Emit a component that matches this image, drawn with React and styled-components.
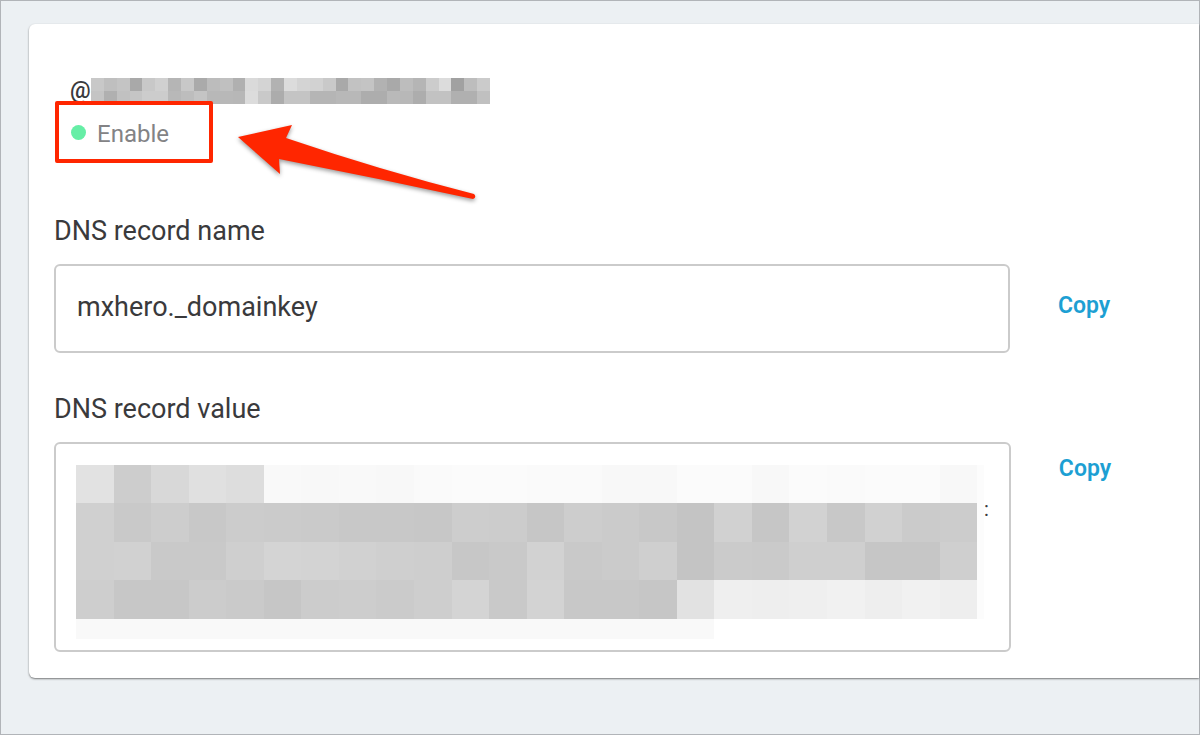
import React from "react";
import styled, { createGlobalStyle } from "styled-components";

const colors = {
  page: "#ecf0f3",
  frame: "#b1b4b8",
  text: "#3a3a3c",
  muted: "#838385",
  border: "#cbcbcb",
  link: "#1d9fd3",
  green: "#66eea6",
  red: "#ff2600",
};

const GlobalStyle = createGlobalStyle`
  *, *::before, *::after {
    box-sizing: border-box;
  }

  body {
    margin: 0;
    font-family: Roboto, "Liberation Sans", sans-serif;
    color: ${colors.text};
  }
`;

const Page = styled.main`
  min-height: 100vh;
  padding: 23px 0 55px 28px;
  background-color: ${colors.page};
  border: 1px solid ${colors.frame};
`;

const Card = styled.section`
  padding: 54px 0 26px 25px;
  background-color: #fff;
  border-radius: 6px 0 0 6px;
  box-shadow: 0 1px 2px rgba(0, 0, 0, 0.5);
`;

const Domain = styled.h1`
  display: flex;
  align-items: center;
  height: 26px;
  margin: 0 0 -3px;
  padding-left: 16px;
  font-size: 23px;
  font-weight: 500;
  line-height: 24px;
`;

const DomainPixels = styled.svg`
  display: block;
  width: 399px;
  height: 26px;
`;

const StatusRow = styled.div`
  position: relative;
  display: flex;
  margin-bottom: 52px;
`;

const Status = styled.div`
  display: flex;
  align-items: center;
  gap: 11px;
  width: 158px;
  height: 62px;
  margin-left: 1px;
  padding: 4px 12px 0;
  color: ${colors.muted};
  font-size: 24px;
  line-height: 28px;
  border: 4px solid ${colors.red};
  border-radius: 2px;
`;

const Dot = styled.span`
  width: 15px;
  height: 15px;
  margin-bottom: 4px;
  border-radius: 50%;
  background-color: ${colors.green};
`;

const Arrow = styled.svg`
  position: absolute;
  left: 176px;
  top: 14px;
  width: 260px;
  height: 100px;
  overflow: visible;
  filter: drop-shadow(0 2px 2px rgba(0, 0, 0, 0.4));
`;

const Field = styled.div`
  display: grid;
  grid-template-columns: 1fr 189px;
  row-gap: 17px;

  & + & {
    margin-top: 40px;
  }
`;

const Label = styled.label`
  grid-column: 1 / -1;
  font-size: 27px;
  line-height: 32px;
`;

const TextInput = styled.input`
  width: 100%;
  height: 89px;
  padding: 0 21px 4px;
  color: ${colors.text};
  font: inherit;
  font-size: 27px;
  background-color: #fff;
  border: 2px solid ${colors.border};
  border-radius: 6px;
  outline: none;
`;

const ValueBox = styled.output`
  display: flex;
  height: 210px;
  padding: 21px 20px 0;
  font-size: 20px;
  line-height: 88px;
  border: 2px solid ${colors.border};
  border-radius: 6px;
`;

const ValuePixels = styled.svg`
  flex: 1;
  min-width: 0;
  height: 176px;
`;

const CopyButton = styled.button`
  align-self: ${({ $top }) => ($top ? "start" : "center")};
  justify-self: start;
  margin-left: 48px;
  padding: ${({ $top }) => ($top ? "13px 0" : "0 0 6px")};
  color: ${colors.link};
  font: inherit;
  font-size: 23px;
  font-weight: 600;
  line-height: 28px;
  background: none;
  border: 0;
  cursor: pointer;
`;

// one hex pair per block, used as a grey level
const domainRows = [
  "c8 bf c4 a9 c8 d0 b5 c8 aa bc c0 b0 da d4 b2 dc d4 d2 c9 a9 c2 c4 b2 a9 bd b5 cc dc a1 bd cb",
  "c4 b0 c1 c5 cc cc b8 bd c4 b8 b8 b7 dc c9 ac c4 c4 b5 b5 b8 b8 ad ad b9 b8 ad c2 c2 b0 b0 c0",
];

const valueRows = [
  "e2 cd d8 e0 dd f9 f8 f9 f8 fa fb fb fa fa f8 f8 fb fb f8 fb fa fb fb f8",
  "d0 c9 cd c8 cc cb ca c8 c8 c7 cd cc c6 cd cb c8 c4 d1 c6 d2 c8 d1 cb cc",
  "d0 d1 c9 c9 cf d4 d3 d1 cf ce c7 c9 d2 c9 cb cf c4 cb ca cf cf c6 c6 cf",
  "ce c7 c7 cc ca c6 cc cd cb ce d4 c9 d3 c8 c8 c6 e2 ef ee ef f1 ee f1 ee",
];

const Blocks = ({ rows, width, height }) =>
  rows.map((row, y) =>
    row
      .split(" ")
      .map((grey, x) => (
        <rect
          key={`${x}-${y}`}
          x={x * width}
          y={y * height}
          width={width}
          height={height}
          fill={`#${grey}${grey}${grey}`}
        />
      ))
  );

const App = () => (
  <>
    <GlobalStyle />
    <Page>
      <Card>
        <Domain>
          @
          <DomainPixels
            viewBox="0 0 31 2"
            preserveAspectRatio="none"
            shapeRendering="crispEdges"
            aria-hidden="true"
          >
            <Blocks rows={domainRows} width={1} height={1} />
          </DomainPixels>
        </Domain>

        <StatusRow>
          <Status>
            <Dot />
            Enable
          </Status>
          <Arrow viewBox="230 115 260 100" aria-hidden="true">
            <path
              d="M238 137 L292 125 L286 138 Q380 170 474 194 Q477 197 473 199 Q376 178 279 159 L280 174 Z"
              fill={colors.red}
            />
          </Arrow>
        </StatusRow>

        <Field>
          <Label htmlFor="record-name">DNS record name</Label>
          <TextInput id="record-name" readOnly value="mxhero._domainkey" />
          <CopyButton type="button">Copy</CopyButton>
        </Field>

        <Field>
          <Label htmlFor="record-value">DNS record value</Label>
          <ValueBox id="record-value">
            <ValuePixels
              viewBox="0 0 908 176"
              preserveAspectRatio="none"
              shapeRendering="crispEdges"
              aria-hidden="true"
            >
              <rect x="0" y="0" width="908" height="154" fill="#fcfcfc" />
              <rect x="0" y="154" width="638" height="20" fill="#f9f9f9" />
              <Blocks rows={valueRows} width={37.55} height={38.4} />
            </ValuePixels>
            :
          </ValueBox>
          <CopyButton type="button" $top>
            Copy
          </CopyButton>
        </Field>
      </Card>
    </Page>
  </>
);

export default App;
